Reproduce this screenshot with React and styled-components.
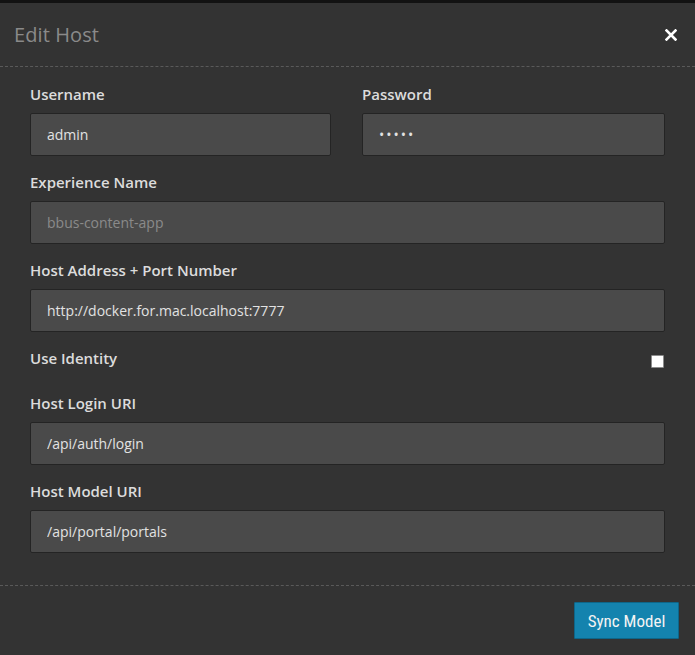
import React from "react";
import styled, { createGlobalStyle } from "styled-components";

const Global = createGlobalStyle`
  html, body { margin: 0; padding: 0; background: #333333; }
  body { font-family: "Open Sans", "Noto Sans", sans-serif; }
  * { box-sizing: border-box; }
`;

const Modal = styled.div`
  width: 695px;
  height: 655px;
  background: #333333;
  border-top: 3px solid #121212;
  display: flex;
  flex-direction: column;
`;

const Header = styled.div`
  height: 64px;
  display: flex;
  align-items: center;
  justify-content: space-between;
  padding: 0 18px 0 14px;
  border-bottom: 1px dashed #5a5a5a;
`;

const Title = styled.h2`
  margin: 0;
  font-size: 20px;
  font-weight: 400;
  color: #8a8a8a;
  letter-spacing: 0.1px;
`;

const Close = styled.button`
  background: none;
  border: none;
  padding: 0;
  display: flex;
  cursor: pointer;
`;

const Body = styled.div`
  padding: 17px 30px 32px 30px;
  display: flex;
  flex-direction: column;
  gap: 16px;
  border-bottom: 1px dashed #5a5a5a;
`;

const Row = styled.div`
  display: grid;
  grid-template-columns: 301px 1fr;
  column-gap: 31px;
`;

const Field = styled.div`
  display: flex;
  flex-direction: column;
`;

const LabelRow = styled.div`
  display: flex;
  justify-content: space-between;
  align-items: flex-start;
  height: 20px;
  margin-bottom: 9px;
`;

const Label = styled.label`
  font-size: 15px;
  line-height: 20px;
  font-weight: 600;
  color: #dcdcdc;
`;

const Input = styled.input`
  height: 43px;
  width: 100%;
  background: #4a4a4a;
  border: 1px solid #242424;
  border-radius: 2px;
  padding: 0 16px;
  font-family: "Open Sans", "Noto Sans", sans-serif;
  font-size: 14px;
  color: ${(p) => (p.$muted ? "#8a8a8a" : "#e2e2e2")};
  outline: none;
  letter-spacing: ${(p) => (p.type === "password" ? "2px" : "0")};
`;

const Check = styled.input`
  appearance: none;
  width: 13px;
  height: 13px;
  margin: 7px 1px 0 0;
  background: #ffffff;
  border: 1px solid #8c8c8c;
  border-radius: 1px;
`;

const Footer = styled.div`
  flex: 1;
  display: flex;
  justify-content: flex-end;
  align-items: flex-start;
  padding: 16px 16px 0 0;
`;

const Button = styled.button`
  width: 105px;
  height: 37px;
  background: #1483ae;
  border: 1px solid #0e6689;
  border-radius: 1px;
  color: #f4f4f4;
  font-family: "Liberation Sans Narrow", "Roboto Condensed", "Open Sans", sans-serif;
  font-size: 17px;
  padding: 0;
  cursor: pointer;
`;

function TextField({ label, value, type = "text", muted }) {
  return (
    <Field>
      <LabelRow>
        <Label>{label}</Label>
      </LabelRow>
      <Input type={type} defaultValue={value} $muted={muted} readOnly />
    </Field>
  );
}

export default function App() {
  return (
    <>
      <Global />
      <Modal>
        <Header>
          <Title>Edit Host</Title>
          <Close aria-label="close">
            <svg width="12" height="12" viewBox="0 0 12 12">
              <path d="M1.5 1.5 L10.5 10.5 M10.5 1.5 L1.5 10.5" stroke="#ffffff" strokeWidth="2.6" strokeLinecap="square" />
            </svg>
          </Close>
        </Header>
        <Body>
          <Row>
            <TextField label="Username" value="admin" />
            <TextField label="Password" value="admin" type="password" />
          </Row>
          <TextField label="Experience Name" value="bbus-content-app" muted />
          <TextField label="Host Address + Port Number" value="http://docker.for.mac.localhost:7777" />
          <Field>
            <LabelRow>
              <Label>Use Identity</Label>
              <Check type="checkbox" />
            </LabelRow>
          </Field>
          <TextField label="Host Login URI" value="/api/auth/login" />
          <TextField label="Host Model URI" value="/api/portal/portals" />
        </Body>
        <Footer>
          <Button>Sync Model</Button>
        </Footer>
      </Modal>
    </>
  );
}
